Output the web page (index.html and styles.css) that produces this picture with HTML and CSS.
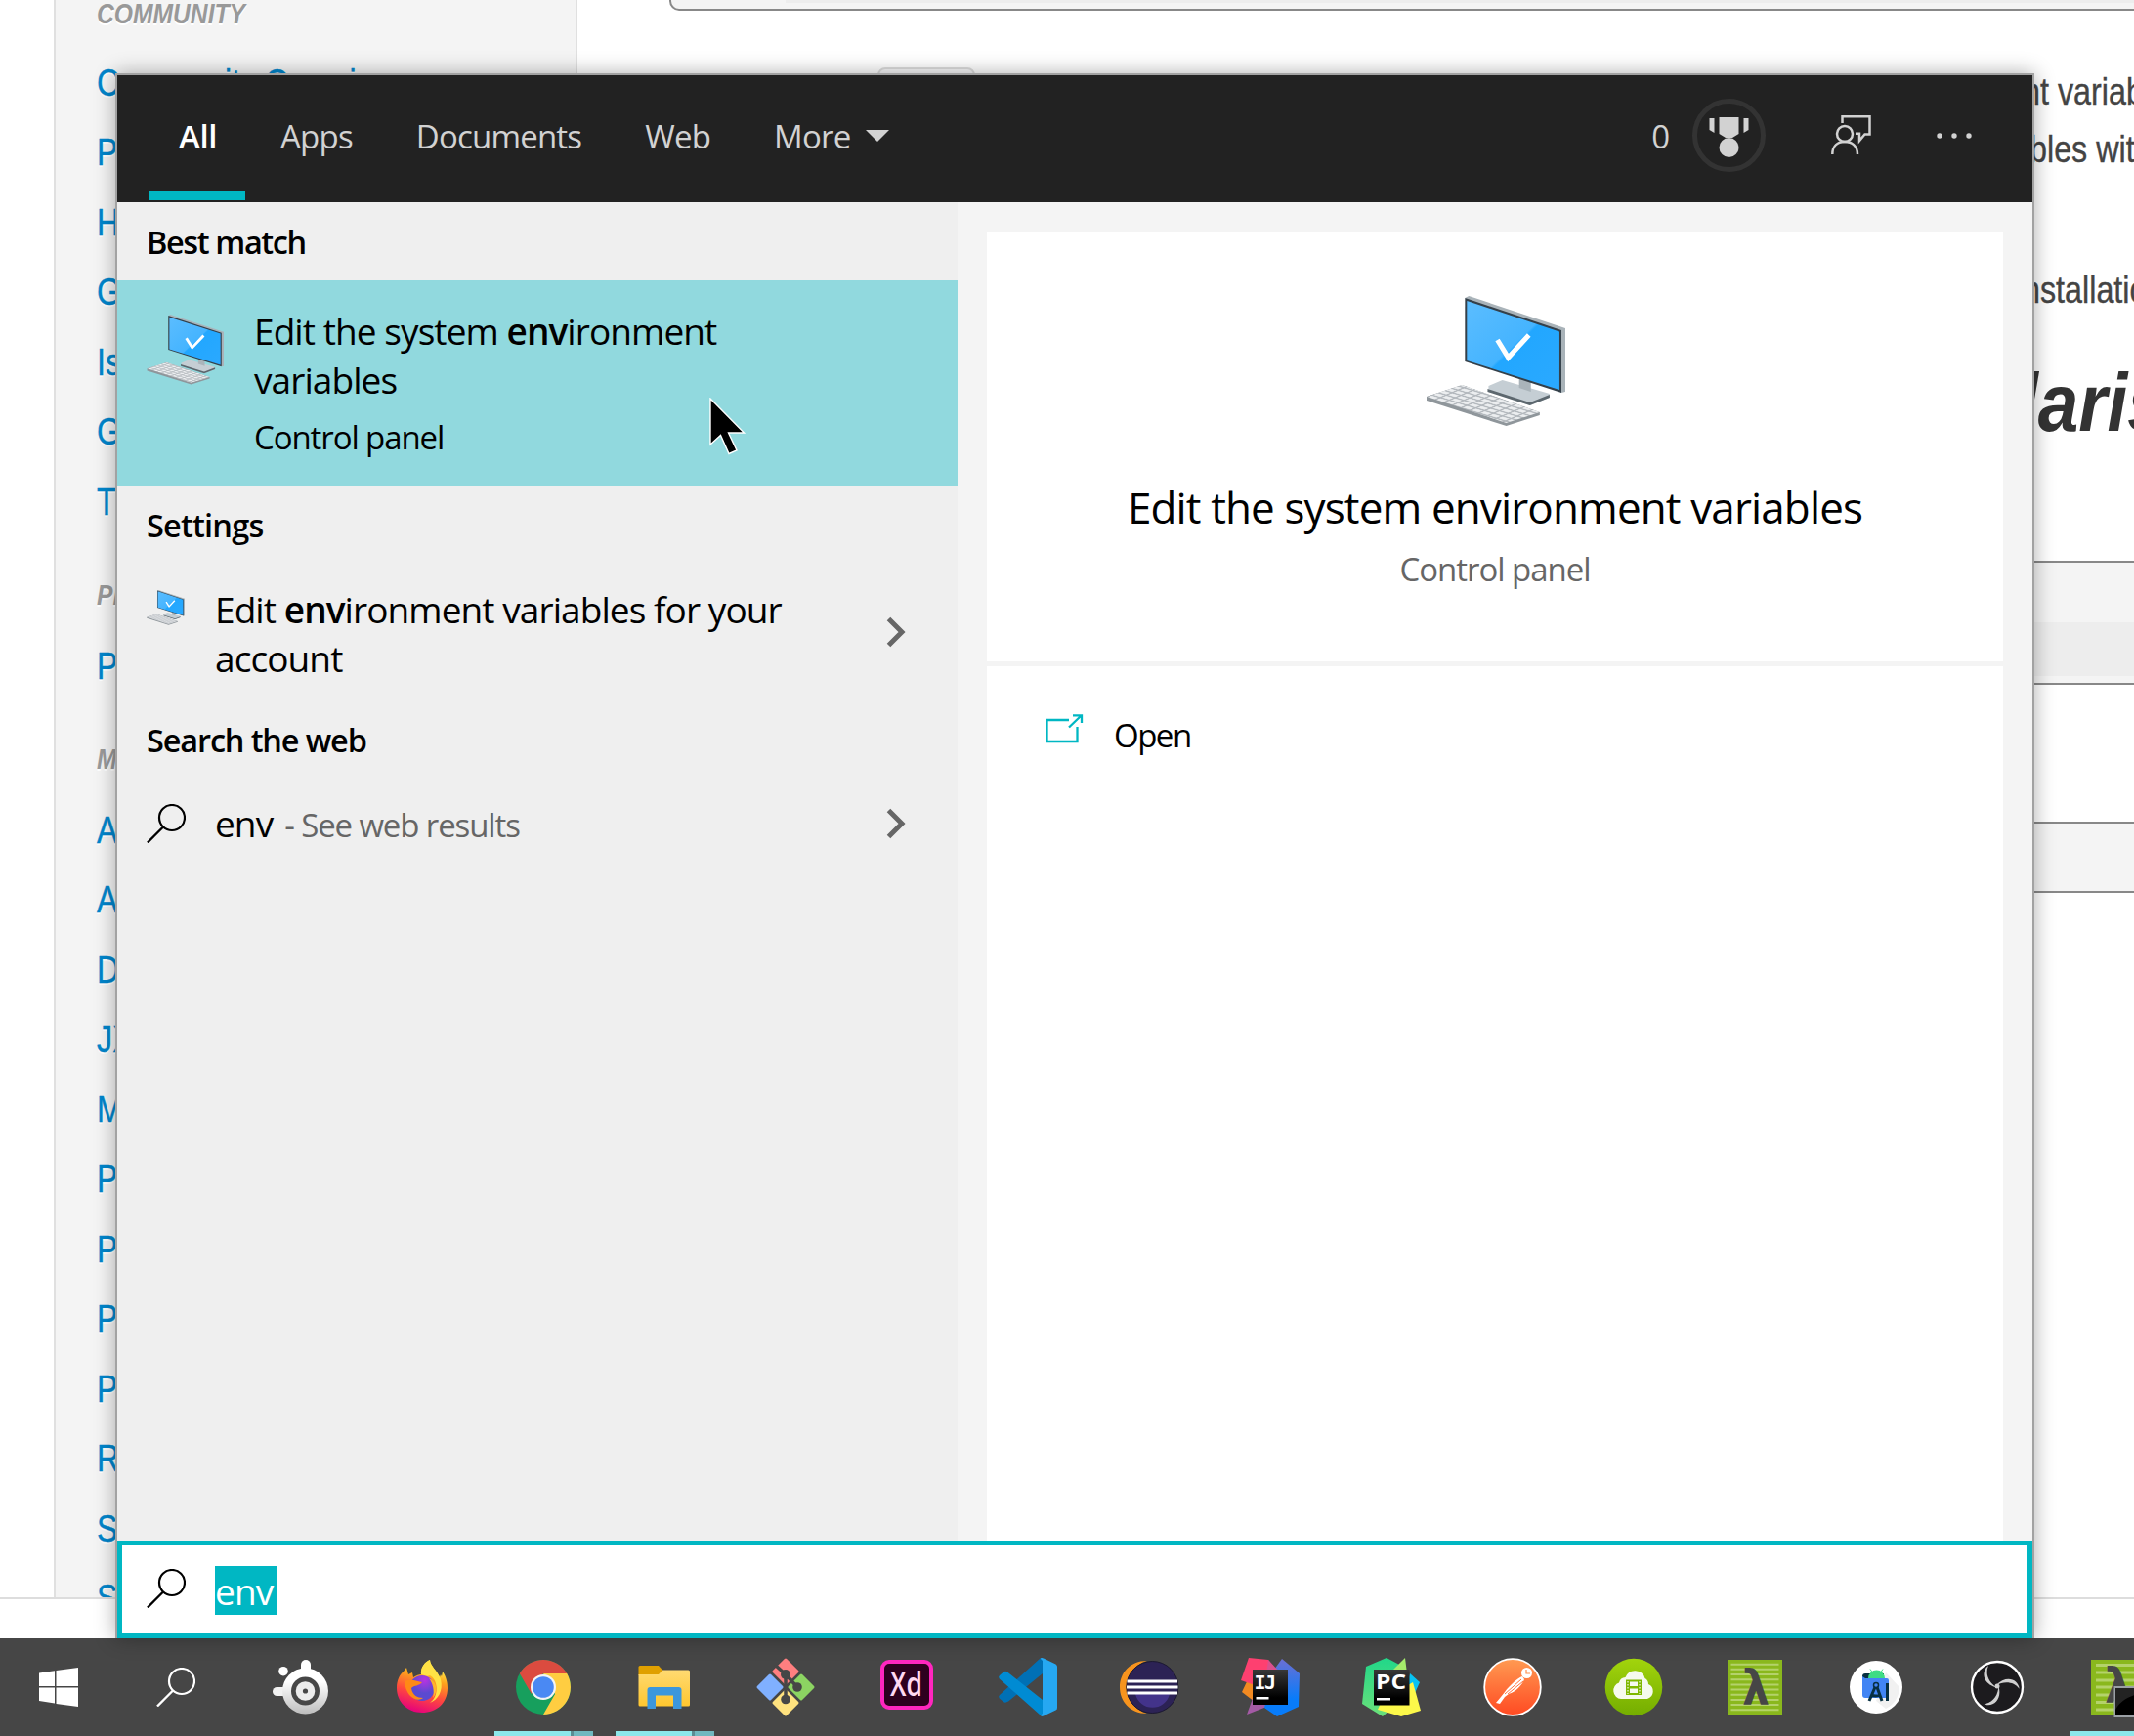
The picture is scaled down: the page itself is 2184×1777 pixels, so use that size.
FILE: index.html
```html
<!DOCTYPE html>
<html lang="en">
<head>
<meta charset="utf-8">
<title>Search</title>
<link rel="stylesheet" href="styles.css">
</head>
<body>
<svg width="0" height="0" class="defs" aria-hidden="true">
  <defs>
    <linearGradient id="screen" x1="0" y1="0" x2="1" y2="1"><stop offset="0" stop-color="#5bbdff"/><stop offset=".5" stop-color="#45b4ff"/><stop offset=".52" stop-color="#22a7ff"/><stop offset="1" stop-color="#2ba9ff"/></linearGradient>
    <pattern id="keys" width="9" height="6" patternUnits="userSpaceOnUse" patternTransform="matrix(1 .3 -1 .42 0 0)"><rect width="9" height="6" fill="#b4b9be"/><rect x="1" y="1" width="7" height="4" fill="#eceef0"/></pattern>
  </defs>
  <symbol id="computer" viewBox="0 0 142 134" preserveAspectRatio="none">
    <path d="M64 92 L78 86 L126 100 L126 104 L106 112 L64 97Z" fill="#c5ced4"/>
    <path d="M63 95 L106 109 L126 101 L126 104 L106 112 L63 98Z" fill="#5c676e"/>
    <path d="M95 84 L107 88 L107 98 L95 94Z" fill="#aab4ba"/>
    <path d="M40 2 L44 0 L142 33 L142 98 L138 99Z" fill="#a9b3b9"/>
    <path d="M40 2 L138 35 L138 99 L40 67Z" fill="#34404a"/>
    <path d="M42 5 L136 36.500 L136 96 L42 66Z" fill="url(#screen)"/>
    <path d="M73 45 L84 63 L105 40" fill="none" stroke="#fff" stroke-width="5"/>
    <path d="M1 103 L37 91 L116 119 L116 122 L82 133 L1 107Z" fill="#8f969b"/>
    <path d="M1 103 L37 91 L116 119 L82 130Z" fill="url(#keys)"/>
  </symbol>
  <symbol id="magnifier" viewBox="0 0 40 40"><circle cx="26" cy="14" r="13" fill="none" stroke="currentColor" stroke-width="2.200"/><path d="M17 23.500L1 39.500" stroke="currentColor" stroke-width="2.400" fill="none"/></symbol>
  <symbol id="chevron" viewBox="0 0 20 32"><path d="M2.500 2.500L16 16L2.500 29.500" fill="none" stroke="currentColor" stroke-width="5"/></symbol>
</svg>

<main class="page">
  <aside class="sidebar">
    <h4 class="group"><span>COMMUNITY</span></h4>
    <a class="link"><span>Community Overview</span></a><a class="link"><span>Pr</span></a><a class="link"><span>H</span></a><a class="link"><span>G</span></a><a class="link"><span>Is</span></a><a class="link"><span>G</span></a><a class="link"><span>Th</span></a>
    <h4 class="group later"><span>PR</span></h4>
    <a class="link"><span>P</span></a>
    <h4 class="group later"><span>M</span></h4>
    <a class="link"><span>A</span></a><a class="link"><span>A</span></a><a class="link"><span>D</span></a><a class="link"><span>JX</span></a><a class="link"><span>M</span></a><a class="link"><span>Pa</span></a><a class="link"><span>Pl</span></a><a class="link"><span>Pl</span></a><a class="link"><span>Pr</span></a><a class="link"><span>R</span></a><a class="link"><span>S</span></a><a class="link"><span>S</span></a>
  </aside>
  <section class="article">
    <div class="code first"><div class="strip"></div></div>
    <p class="line one"><code class="chip"></code><span>nt variables</span></p>
    <p class="line two"><span>bles with</span></p>
    <p class="line three"><span>nstallation</span></p>
    <h2 class="title"><span>laris</span></h2>
    <div class="code second"><div class="strip"></div></div>
    <div class="code third"></div>
  </section>
</main>

<div class="search">
  <header class="head">
    <nav class="tabs">
      <span class="tab active">All</span><span class="tab">Apps</span><span class="tab">Documents</span><span class="tab">Web</span><span class="tab more">More<svg width="24" height="12" viewBox="0 0 24 12"><path d="M0 0H24L12 12Z" fill="currentColor"/></svg></span>
    </nav>
    <div class="tools">
      <span class="points">0</span>
      <svg class="ring" width="75" height="75" viewBox="0 0 75 75"><circle cx="37.500" cy="37.500" r="35" fill="none" stroke="#333" stroke-width="5"/><path d="M27.500 19H47.500V36L41 40H34L27.500 36Z M17.500 20H22.500V35L17.500 32Z M52.500 20H57.500V32L52.500 35Z" fill="#d2d2d2"/><circle cx="37.500" cy="50" r="10" fill="#d2d2d2"/></svg>
      <svg width="41" height="41" viewBox="0 0 41 41" fill="none" stroke="#d2d2d2" stroke-width="2.500"><circle cx="14" cy="19" r="8"/><path d="M1.300 40C1.300 31 7 27 14 27S27 31 27 40M11.500 8V1.300H39.500V19.500H34.500L29 26V18.800H25"/></svg>
      <svg class="dots" width="36" height="8" viewBox="0 0 36 8" fill="#d2d2d2"><circle cx="3" cy="4" r="2.700"/><circle cx="18" cy="4" r="2.700"/><circle cx="33" cy="4" r="2.700"/></svg>
    </div>
  </header>
  <div class="body">
    <div class="results">
      <h3 class="section tight">Best match</h3>
      <div class="best">
        <svg class="pic" width="79" height="72"><use href="#computer"/></svg>
        <div><div class="name">Edit the system <b>env</b>ironment<br>variables</div><div class="kind">Control panel</div></div>
      </div>
      <h3 class="section loose">Settings</h3>
      <div class="row tall">
        <svg class="mini" width="39" height="36"><use href="#computer"/></svg>
        <div class="name">Edit <b>env</b>ironment variables for your<br>account</div>
        <svg class="go" width="20" height="32"><use href="#chevron"/></svg>
      </div>
      <h3 class="section">Search the web</h3>
      <div class="row">
        <svg class="mag" width="40" height="40"><use href="#magnifier"/></svg>
        <div class="name">env<span class="hint">- See web results</span></div>
        <svg class="go" width="20" height="32"><use href="#chevron"/></svg>
      </div>
    </div>
    <div class="preview">
      <div class="card">
        <svg width="143" height="134"><use href="#computer"/></svg>
        <div class="big">Edit the system environment variables</div>
        <div class="sub">Control panel</div>
      </div>
      <div class="actions">
        <svg width="40" height="30" viewBox="0 0 40 30" fill="none" stroke="#00b7c3" stroke-width="2.300"><path d="M24 6H1.500V28H32.500V13M24 13.500L36 2M28 1.300H37V9"/></svg>
        <span>Open</span>
      </div>
    </div>
  </div>
  <div class="input"><svg width="40" height="40"><use href="#magnifier"/></svg><span class="typed">env</span></div>
</div>

<svg class="cursor" width="38" height="60" viewBox="0 0 38 60"><path d="M1 1V48L11.500 38.500L20 57.500L28 54L19.500 36H35.500Z" fill="#000" stroke="#fff" stroke-width="1.400"/></svg>

<footer class="taskbar">
  <div class="app"><svg viewBox="0 0 60 60"><path d="M10 15.500L26 13.200V29H10Z M27.500 13L50 10V29H27.500Z M10 30.500H26V46.500L10 44Z M27.500 30.500H50V50L27.500 47Z" fill="#fff"/></svg></div>
  <div class="app"><svg class="find" viewBox="0 0 40 40"><use href="#magnifier"/></svg></div>
  <div class="app"><svg viewBox="0 0 60 60"><defs><linearGradient id="st" x1="0" y1="0" x2="0" y2="1"><stop offset=".3" stop-color="#fff"/><stop offset="1" stop-color="#bdbdbd"/></linearGradient></defs><g fill="url(#st)"><rect x="30" y="2" width="10" height="18" rx="5" fill="#fff"/><rect x="1" y="30" width="20" height="9" rx="4.500" fill="#f2f2f2"/><circle cx="12" cy="13.700" r="4.800" fill="#fff"/><circle cx="34.500" cy="34" r="23.500"/></g><circle cx="34.500" cy="34" r="14.500" fill="#464646"/><circle cx="34.500" cy="34" r="9.800" fill="#ececec"/><circle cx="34.500" cy="34" r="2.600" fill="#464646"/></svg></div>
  <div class="app"><svg viewBox="0 0 60 60"><defs><linearGradient id="ff" x1=".7" y1="0" x2=".4" y2="1"><stop offset=".1" stop-color="#fff44f"/><stop offset=".35" stop-color="#ffa31c"/><stop offset=".65" stop-color="#ff4a3d"/><stop offset="1" stop-color="#e5007d"/></linearGradient><radialGradient id="fp" cx=".6" cy=".2"><stop offset="0" stop-color="#b833e1"/><stop offset="1" stop-color="#5b4ad0"/></radialGradient></defs><path d="M14 10L16 17L20 15L21 20C24 18 27 17 29 17C28 10 33 4 38 2C38 8 45 13 48 20L49 17L50 19L51 14C55 20 56 26 56 31C56 46 45 56 30 56S4 45 4 31C4 23 7 17 11 14Z" fill="url(#ff)"/><path d="M38 2C38 8 46 13 49 22C52 34 46 43 38 46C48 39 46 22 38 18C34 20 31 17 29 17C28 10 33 4 38 2Z" fill="#ffe245"/><circle cx="30" cy="31" r="13" fill="url(#fp)"/><path d="M12 24C18 21 26 24 30 25C27 29 22 28 19 31C20 38 25 41 31 41C25 46 13 40 12 24Z" fill="#ff8a16"/><path d="M37 21C45 24 47 34 41 41C43 34 41 26 37 21Z" fill="#ffb52b"/></svg></div>
  <div class="app open"><svg viewBox="0 0 60 60"><circle cx="30" cy="30" r="28" fill="#179f5d"/><path d="M30 58A28 28 0 0 0 54.200 16H30L42.100 37Z" fill="#ffcd41"/><path d="M5.800 16A28 28 0 0 1 54.200 16H30L17.900 37Z" fill="#db4b3f"/><circle cx="30" cy="30" r="13" fill="#f4f4f4"/><circle cx="30" cy="30" r="10.800" fill="#4a89f3"/></svg></div>
  <div class="app open"><svg viewBox="0 0 60 60"><defs><linearGradient id="fo" x1="0" y1="0" x2="0" y2="1"><stop offset="0" stop-color="#ffda72"/><stop offset="1" stop-color="#fec62f"/></linearGradient></defs><path d="M3.500 9.500Q3.500 8 5 8H24L28 12.500L24 18H3.500Z" fill="#e0a000"/><path d="M3.500 17H24L28 12.500H54.500Q56 12.500 56 14V48Q56 49.500 54.500 49.500H5Q3.500 49.500 3.500 48Z" fill="url(#fo)"/><path d="M12.500 52V33Q12.500 30 15.500 30H44.500Q47.500 30 47.500 33V52H39V38.500H21V52Z" fill="#3c97dc"/></svg></div>
  <div class="app"><svg viewBox="0 0 60 60"><g transform="rotate(45 30 30)"><rect x="8.700" y="8.700" width="20" height="20" rx="1.500" fill="#ff7f80"/><rect x="31.300" y="8.700" width="20" height="20" rx="1.500" fill="#8cd462"/><rect x="8.700" y="31.300" width="20" height="20" rx="1.500" fill="#80b0ff"/><rect x="31.300" y="31.300" width="20" height="20" rx="1.500" fill="#ffe27f"/></g><path d="M19 7L30 17V42M30 17L42 30" stroke="#464646" stroke-width="3.500" fill="none"/><g fill="#464646"><circle cx="30" cy="17" r="5"/><circle cx="42" cy="30" r="4.800"/><circle cx="30" cy="42.500" r="4.800"/></g></svg></div>
  <div class="app"><svg viewBox="0 0 60 60"><rect x="5" y="4" width="50" height="47" rx="7" fill="#2e001e" stroke="#ff26be" stroke-width="4"/><text x="13" y="39" class="xd" textLength="33" lengthAdjust="spacingAndGlyphs">Xd</text></svg></div>
  <div class="app"><svg viewBox="0 0 60 60"><path d="M45 0V16L10 44.500Q7 46.500 5 45L.8 41.500Q-.8 39.500 1 38L42 1Z" fill="#0070b5"/><path d="M5 14.500Q7 13 9 14.500L45 43V60L42 58L.8 21.500Q-.8 19.500 1 18Z" fill="#008bd3"/><path d="M42.500 .5Q44 -.3 46 .5L58.500 6.500Q60 7.500 60 9V51Q60 53 58.500 53.500L46 59.500Q44 60.300 42.500 59L45 57V3Z" fill="#26a8f2"/></svg></div>
  <div class="app"><svg viewBox="0 0 60 60"><path d="M28 3C10 3 0 16 0 30S10 57 28 57C16 54 8 43 8 30S16 6 28 3Z" fill="#f7941e"/><circle cx="33.300" cy="30" r="26.500" fill="#2c2255" stroke="#1b1830"/><path d="M16 37A18 18 0 0 0 51 37Z" fill="#43338a"/><path d="M7.500 24H59M7 30H59.500M7.500 36H59" stroke="#fff" stroke-width="3"/></svg></div>
  <div class="app"><svg viewBox="0 0 60 60"><defs><linearGradient id="ib" x1="0" y1="0" x2="0" y2="1"><stop offset="0" stop-color="#6b6fd4"/><stop offset=".7" stop-color="#087cfa"/></linearGradient><linearGradient id="blk" x1="0" y1="0" x2="0" y2="1"><stop offset="0" stop-color="#383838"/><stop offset=".8" stop-color="#000"/></linearGradient></defs><path d="M6.700 23L1 35L14 45V23Z" fill="#f28a22"/><path d="M14 36L6 58L34 47V36Z" fill="#a45aa5"/><path d="M42 1L60 16L59 50L37 60L24 51L34 12Z" fill="url(#ib)"/><path d="M8 0L28 2L42 20L20 30L0 23Z" fill="#fe4070"/><path d="M28 2L40 15V30H24Z" fill="#d9508e"/><rect x="12" y="12" width="36" height="36" fill="url(#blk)"/><text x="13.500" y="32" class="jb serif">I</text><text x="24" y="32" class="jb serif">J</text><rect x="15.500" y="40" width="13" height="2.500" fill="#fff"/></svg></div>
  <div class="app"><svg viewBox="0 0 60 60"><defs><linearGradient id="pg" x1="0" y1="0" x2="0" y2="1"><stop offset="0" stop-color="#21d789"/><stop offset="1" stop-color="#6be07a"/></linearGradient></defs><path d="M25 0L4 9L0 47L21 60L38 45L40 8Z" fill="url(#pg)"/><path d="M44 0L32 12L46 16Z" fill="#a5ec6b"/><path d="M49 16L59 25L54 36L44 34Z" fill="#07c3f2"/><path d="M52 25L60 54L40 60L16 53L20 44Z" fill="#fcf84a"/><rect x="12" y="12" width="36.500" height="36.500" fill="url(#blk)"/><text x="14" y="32" class="jb" textLength="31" lengthAdjust="spacingAndGlyphs">PC</text><rect x="15" y="41" width="14" height="2.500" fill="#fff"/></svg></div>
  <div class="app"><svg viewBox="0 0 60 60"><defs><linearGradient id="po" x1="0" y1="0" x2="0" y2="1"><stop offset="0" stop-color="#ff9a52"/><stop offset="1" stop-color="#ff4a22"/></linearGradient></defs><circle cx="30" cy="30" r="28.800" fill="url(#po)" stroke="#fff" stroke-width="1.800"/><circle cx="44.500" cy="15.500" r="5.500" fill="#fff"/><path d="M44 12V16H48" stroke="#ff8f4e" stroke-width="1.200" fill="none"/><path d="M40 19C36 20 27 28 22 35L18 40L13 46L17 47L22 40L26 37C33 35 40 28 42 22Z" fill="#fff"/><path d="M39 22L22 37M41 24L25 37" stroke="#ff7440" stroke-width="1"/></svg></div>
  <div class="app"><svg viewBox="0 0 60 60"><defs><linearGradient id="cl" x1="0" y1="0" x2="0" y2="1"><stop offset="0" stop-color="#a2d40c"/><stop offset="1" stop-color="#74ad00"/></linearGradient></defs><circle cx="30" cy="30" r="29.300" fill="url(#cl)"/><path d="M17 42A8.500 8.500 0 0 1 15 25.500A7 7 0 0 1 21.500 20A10.500 10.500 0 0 1 41.500 21A7 7 0 0 1 45 27A8 8 0 0 1 44 42Z" fill="#f6faee"/><path d="M22 22.500H38V38H22Z" fill="#7fb800"/><path d="M26 24.500H34V29H26ZM26 31.500H34V36H26Z" fill="#f6faee"/><path d="M24 24V37M36 24V37" stroke="#f6faee" stroke-width="1.200" stroke-dasharray="1.500 1.500"/></svg></div>
  <div class="app"><svg viewBox="0 0 60 60"><rect x="2" y="2" width="56" height="56" fill="#8ab81d"/><path d="M5.500 6.700H54.500M5.500 11.800H54.500M5.500 17H54.500M5.500 22.200H54.500M5.500 27.400H54.500M5.500 32.600H54.500M5.500 37.800H54.500M5.500 43H54.500M5.500 48H54.500M5.500 53.200H54.500" stroke="#b4d26a" stroke-width="2"/><text x="17" y="48" class="lam" textLength="28" lengthAdjust="spacingAndGlyphs">λ</text></svg></div>
  <div class="app"><svg viewBox="0 0 60 60"><circle cx="30" cy="30" r="27" fill="#fff"/><path d="M40 15L54 30A25 25 0 0 1 40 52L30 44Z" fill="#f1f1f1"/><path d="M16 19Q16 16 19 16H38V21H16Z" fill="#073042"/><path d="M16 19L19 21H41Q43 21 43 23V41H19Q16 41 16 38Z" fill="#4285f4"/><path d="M22 21A8.500 8.500 0 0 1 39 21Z" fill="#3ddc84"/><path d="M24 11.500L26 14.500M37 11.500L35 14.500" stroke="#3ddc84"/><path d="M29 30L23 44M31 30L36 44M25 38Q30 40 34.500 38M41.500 26V44" stroke="#073042" stroke-width="3" fill="none"/><circle cx="30" cy="28" r="2.500" fill="none" stroke="#073042" stroke-width="1.500"/></svg></div>
  <div class="app"><svg viewBox="0 0 60 60"><circle cx="30" cy="30" r="26" fill="#1c1b1e" stroke="#fff" stroke-width="2.300"/><g fill="#cfcfcf"><path d="M21 8C13 14 15 27 30 30.500C22 26 17 17 21 8Z"/><path d="M21 8C13 14 15 27 30 30.500C22 26 17 17 21 8Z" transform="rotate(120 30 29)"/><path d="M21 8C13 14 15 27 30 30.500C22 26 17 17 21 8Z" transform="rotate(240 30 29)"/></g><circle cx="30" cy="29" r="2.500" fill="#cfcfcf"/></svg></div>
  <div class="app open last"><svg viewBox="0 0 60 60"><rect x="2" y="2" width="56" height="56" fill="#8ab81d"/><path d="M7 7.500H54.500M7 15H54.500M7 23H54.500M7 30H54.500M7 38H54.500M7 45.500H54.500M7 53H54.500" stroke="#b4d26a" stroke-width="3"/><text x="16" y="46" class="lam" textLength="28" lengthAdjust="spacingAndGlyphs">λ</text><rect x="25.500" y="29" width="36" height="32" fill="#9ba0a5"/><rect x="27" y="31" width="34" height="28" fill="#000"/><path d="M27 31H61V35C45 37 33 42 27 53Z" fill="#232323"/></svg></div>
</footer>
</body>
</html>
```
FILE: styles.css
```css
*{box-sizing:border-box}
body{margin:0;position:relative;width:2184px;height:1777px;overflow:hidden;background:#fff;font-family:"Open Sans","Noto Sans",sans-serif;display:flex;flex-direction:column}
h2,h3,h4,p{margin:0}
svg{display:block;flex:none}
.defs{position:absolute}

/* web page behind the search window */
.page{display:flex;height:1637px;margin-bottom:40px;flex:none;overflow:hidden;border-bottom:2px solid #ddd;font-family:"Liberation Sans",Arial,sans-serif}
.sidebar{width:536px;margin-left:55px;flex:none;background:#f4f4f4;border:solid #e0e0e0;border-width:0 2px;padding-left:42px;padding-top:.5px}
.page span{display:inline-block;transform:scaleX(.85);transform-origin:0 50%;white-space:nowrap}
.group{font:italic bold 29px/27px "Liberation Sans",Arial,sans-serif;color:#999;height:49.250px;text-shadow:0 2px 0 #fff}
.group.later{height:96.500px;padding-top:46px}
.link{display:block;height:71.500px;font-size:38px;line-height:71.500px;color:#0085cb;-webkit-text-stroke:.4px #0085cb;text-shadow:0 2px 0 #fff}
.article{flex:1;min-width:0;padding-left:94px}
.code{background:#f4f4f4;border:2px solid #888;border-right:0}
.code .strip{background:#ededed}
.code.first{height:11px;border-top:0;border-radius:0 0 0 10px;margin-bottom:54px}
.code.first .strip{height:3px;margin-left:117px}
.line{height:58.600px;line-height:58.600px;font-size:38px;color:#444;-webkit-text-stroke:.4px #444;white-space:nowrap;display:flex}
.line.one{padding-left:213px}
.chip{width:100px;height:50px;margin:4px 1072px 0 0;border:2px solid #ddd;border-radius:8px;background:#f7f7f9;flex:none}
.line.two{padding-left:1392px}
.line.three{padding-left:1385px;margin-top:86px}
.title{font:italic bold 84px/100px "Liberation Sans",Arial,sans-serif;color:#333;padding-left:1380px;margin-top:35px;white-space:nowrap}
.page .title span{transform:scaleX(.89)}
.code.second{height:127px;margin-top:112px;padding-top:61px}
.code.second .strip{height:55px}
.code.third{height:73px;margin-top:140px}

/* search window */
.search{position:absolute;left:118px;top:75px;width:1964px;height:1602px;border:2px solid #a2a2a2;border-bottom:0;box-shadow:0 0 20px rgba(0,0,0,.32);display:flex;flex-direction:column;background:#f4f4f4;color:#000}
.head{height:130px;flex:none;background:#222;color:#d2d2d2;display:flex;justify-content:space-between;align-items:center;padding:0 62px 7px 63px;font-size:33px;letter-spacing:-.8px;line-height:44px}
.tabs{display:flex;gap:65px;height:100%;align-items:center;padding-top:3px}
.active{position:relative;color:#fff;font-weight:600;letter-spacing:-.4px}
.active::after{content:"";position:absolute;left:-30px;width:98px;height:10px;top:76.500px;background:#00b7c3}
.more{display:flex;align-items:center;gap:16px}
.more svg{margin-top:-2px}
.tools{display:flex;align-items:center}
.points{letter-spacing:0;padding-top:3px}
.ring{margin:0 67px 0 23px}
.dots{margin-left:67px}
.body{flex:1;display:flex;min-height:0}
.results{width:860px;background:#efefef}
.section{height:80px;line-height:80px;padding:1px 0 0 30px;font-size:32.500px;font-weight:600;letter-spacing:-1.150px}
.tight{letter-spacing:-1.400px}
.loose{letter-spacing:-.8px}
.best{height:210px;background:#91d9de;display:flex;gap:31px;padding:27px 0 0 30px}
.pic{margin-top:8px}
.name{font-size:37px;line-height:50px;letter-spacing:-.92px}
.name b{font-weight:600}
.kind{font-size:33px;line-height:44px;letter-spacing:-1.100px;margin-top:12px}
.row{height:92px;display:flex;align-items:center;padding:2px 53px 0 30px}
.row.tall{height:140px}
.row.tall .name{padding-top:1px}
.mini{margin:-52px 31px 0 0}
.mag{margin:-2px 30px 0 0}
.go{margin:-2px 0 0 auto;color:#666}
.hint{font-size:33px;letter-spacing:-1.120px;color:#666;margin-left:12px}
.preview{flex:1;padding:30px 30px 0;display:flex;flex-direction:column}
.card{height:440px;flex:none;background:#fff;display:flex;flex-direction:column;align-items:center;padding-top:66px}
.big{font-size:44px;line-height:60px;letter-spacing:-.87px;margin-top:52px}
.sub{font-size:33px;line-height:44px;letter-spacing:-1.050px;color:#666;margin-top:12px}
.actions{flex:1;background:#fff;margin-top:5px;padding:49px 0 0 60px;display:flex;align-items:flex-start;gap:30px;font-size:33px;line-height:44px;letter-spacing:-1.500px}
.input{height:100px;flex:none;background:#fff;border:5px solid #00b7c3;display:flex;align-items:center;padding:1px 0 0 25px;gap:30px}
.input svg{margin-top:-3px}
.typed{background:#00b7c3;color:#fff;font-size:37px;line-height:52px;letter-spacing:-.8px;width:63px;height:50px}
.cursor{position:absolute;left:726px;top:407px}

/* taskbar */
.taskbar{height:100px;width:2240px;flex:none;background:#464646;display:flex;color:#fff}
.app{width:124px;height:100px;flex:none;position:relative;display:flex;align-items:center;justify-content:center}
.app:nth-child(1){width:120px}
.app:nth-child(2){width:126px;padding-right:6px}
.app svg{width:60px;height:60px;overflow:visible}
.app svg.find{width:40px;height:40px}
.open::after{content:"";position:absolute;left:12px;bottom:0;width:101px;height:5px;background:linear-gradient(90deg,#8ce7ea 78px,#5a8c92 78px,#5a8c92 81px,#70b8bf 81px)}
.last::after{background:#8ce7ea}
.xd{font:600 34px "Open Sans",sans-serif;fill:#ffd9f2}
.jb{font:bold 22px "Open Sans",sans-serif;fill:#fff}
.jb.serif{font-family:"DejaVu Sans Mono",monospace;font-size:20px}
.lam{font:bold 50px "DejaVu Sans",sans-serif;fill:#464646}
```
